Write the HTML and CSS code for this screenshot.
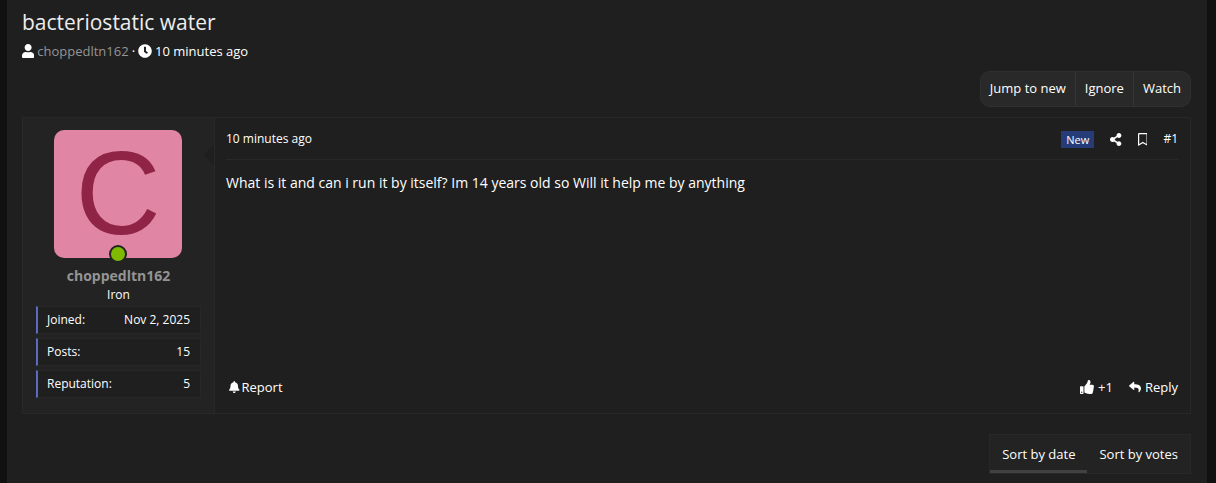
FILE: index.html
```
<!DOCTYPE html>
<html lang="en">
  <head>
    <meta charset="utf-8" />
    <meta name="viewport" content="width=device-width, initial-scale=1" />
    <title>bacteriostatic water</title>
    <link rel="stylesheet" href="styles.css">
  </head>
  <body>
    <main class="page">
      <header class="thread-header">
        <h1>bacteriostatic water</h1>
        <div class="thread-meta">
          <svg class="icon icon-user" viewBox="0 0 448 512"><path d="M224 256c70.7 0 128-57.3 128-128S294.7 0 224 0 96 57.3 96 128s57.3 128 128 128zm89.6 32h-16.7c-22.2 10.2-46.9 16-72.9 16s-50.6-5.8-72.9-16h-16.7C60.2 288 0 348.2 0 422.4V464c0 26.5 21.5 48 48 48h352c26.5 0 48-21.5 48-48v-41.6c0-74.2-60.2-134.4-134.4-134.4z"/></svg>
          <a href="#" class="author">choppedltn162</a>
          <span>·</span>
          <svg class="icon" viewBox="0 0 512 512"><path d="M256 8C119 8 8 119 8 256s111 248 248 248 248-111 248-248S393 8 256 8zm57.1 350.1L224.9 294c-3.1-2.3-4.9-5.9-4.9-9.7V116c0-6.6 5.4-12 12-12h48c6.6 0 12 5.4 12 12v137.7l63.5 46.2c5.4 3.9 6.5 11.4 2.6 16.8l-28.2 38.8c-3.9 5.3-11.4 6.5-16.8 2.6z"/></svg>
          <a href="#"><time>10 minutes ago</time></a>
        </div>
      </header>

      <div class="button-group">
        <a href="#">Jump to new</a>
        <button type="button">Ignore</button>
        <button type="button">Watch</button>
      </div>

      <article class="post">
        <aside class="post-user">
          <a href="#" class="avatar" aria-label="choppedltn162">C<span class="online"></span></a>
          <h4><a href="#">choppedltn162</a></h4>
          <div class="rank">Iron</div>
          <dl class="stats">
            <div><dt>Joined:</dt><dd>Nov 2, 2025</dd></div>
            <div><dt>Posts:</dt><dd>15</dd></div>
            <div><dt>Reputation:</dt><dd>5</dd></div>
          </dl>
        </aside>

        <div class="post-main">
          <header class="post-header">
            <a href="#"><time>10 minutes ago</time></a>
            <div class="post-tools">
              <span class="badge">New</span>
              <a href="#" aria-label="Share"><svg class="icon icon-tool" viewBox="0 0 448 512"><path d="M352 320c-22.608 0-43.387 7.819-59.79 20.895l-102.486-64.054a96.551 96.551 0 0 0 0-41.683l102.486-64.054C308.613 184.181 329.392 192 352 192c53.019 0 96-42.981 96-96S405.019 0 352 0s-96 42.981-96 96c0 7.158.79 14.13 2.276 20.841L155.79 180.895C139.387 167.819 118.608 160 96 160c-53.019 0-96 42.981-96 96s42.981 96 96 96c22.608 0 43.387-7.819 59.79-20.895l102.486 64.054A96.301 96.301 0 0 0 256 416c0 53.019 42.981 96 96 96s96-42.981 96-96-42.981-96-96-96z"/></svg></a>
              <a href="#" aria-label="Bookmark"><svg class="icon icon-tool" viewBox="0 0 384 512"><path d="M336 0H48C21.49 0 0 21.49 0 48v464l192-112 192 112V48c0-26.51-21.49-48-48-48zm0 428.43l-144-84-144 84V54a6 6 0 0 1 6-6h276c3.314 0 6 2.683 6 5.996V428.43z"/></svg></a>
              <a href="#">#1</a>
            </div>
          </header>

          <div class="post-body">What is it and can i run it by itself? Im 14 years old so Will it help me by anything</div>

          <footer class="post-footer">
            <a href="#" class="report"><svg class="icon icon-small" viewBox="0 0 448 512"><path d="M224 512c35.32 0 63.97-28.65 63.97-64H160.03c0 35.35 28.65 64 63.97 64zm215.39-149.71c-19.32-20.76-55.47-51.99-55.47-154.29 0-77.7-54.48-139.9-127.94-155.16V32c0-17.67-14.32-32-31.98-32s-31.98 14.33-31.98 32v20.84C118.56 68.1 64.08 130.3 64.08 208c0 102.3-36.15 133.53-55.47 154.29-6 6.45-8.66 14.16-8.61 21.71.11 16.4 12.98 32 32.1 32h383.8c19.12 0 32-15.6 32.1-32 .05-7.55-2.61-15.27-8.61-21.71z"/></svg>Report</a>
            <div class="post-actions">
              <button type="button"><svg class="icon" viewBox="0 0 512 512"><path d="M104 224H24c-13.255 0-24 10.745-24 24v240c0 13.255 10.745 24 24 24h80c13.255 0 24-10.745 24-24V248c0-13.255-10.745-24-24-24zM64 472c-13.255 0-24-10.745-24-24s10.745-24 24-24 24 10.745 24 24-10.745 24-24 24zM384 81.452c0 42.416-25.97 66.208-33.277 94.548h101.723c33.397 0 59.397 27.746 59.553 58.098.084 17.938-7.546 37.249-19.439 49.197l-.11.11c9.836 23.337 8.237 56.037-9.308 79.469 8.681 25.895-.069 57.704-16.382 74.757 4.298 17.598 2.244 32.575-6.148 44.632C440.202 511.587 389.616 512 346.839 512l-2.845-.001c-48.287-.017-87.806-17.598-119.56-31.725-15.957-7.099-36.821-15.887-52.651-16.178-6.54-.12-11.783-5.457-11.783-11.998v-213.77c0-3.2 1.282-6.271 3.558-8.521 39.614-39.144 56.648-80.587 89.117-113.111 14.804-14.832 20.188-37.236 25.393-58.902C282.515 39.293 291.817 0 312 0c24 0 72 8 72 81.452z"/></svg>+1</button>
              <a href="#"><svg class="icon icon-small" viewBox="0 0 512 512"><path d="M8.309 189.836L184.313 37.851C199.719 24.546 224 35.347 224 56.015v80.053c160.629 1.839 288 34.032 288 186.258 0 61.441-39.581 122.309-83.333 154.132-13.653 9.931-33.111-2.533-28.077-18.631 45.344-145.012-21.507-183.51-176.59-185.742V360c0 20.7-24.3 31.453-39.687 18.164l-176.004-151.992c-11.071-9.562-11.086-26.753 0-36.336z"/></svg>Reply</a>
            </div>
          </footer>
        </div>
      </article>

      <nav class="sort-tabs">
        <a href="#" class="active">Sort by date</a>
        <a href="#">Sort by votes</a>
      </nav>
    </main>
  </body>
</html>
```
FILE: styles.css
```
:root {
  --bg: #111;
  --page: #1f1f1f;
  --panel: #232323;
  --button: #292929;
  --border: #282828;
  --text: #fff;
  --muted: #949494;
  --accent: #5c6bc0;
}
* {
  margin: 0;
  padding: 0;
  box-sizing: border-box;
}
body {
  min-height: 100vh;
  display: flex;
  padding: 0 9px 0 7px;
  background: var(--bg);
  color: var(--text);
  font: 13px/20px "Segoe UI", "Open Sans", "Noto Sans", sans-serif;
}
a {
  color: inherit;
  text-decoration: none;
}
button {
  background: none;
  border: none;
  color: inherit;
  font: inherit;
  cursor: pointer;
}
.icon {
  height: 14px;
  fill: currentColor;
  flex: none;
}
.icon-small {
  height: 12px;
}
.icon-tool {
  height: 13px;
}
.page {
  flex: 1;
  display: flex;
  flex-direction: column;
  padding: 8px 16px 8px 15px;
  background: var(--page);
}

.thread-header h1 {
  font-size: 21px;
  font-weight: 400;
  line-height: 28px;
  color: #ededed;
}
.thread-meta {
  display: flex;
  align-items: center;
  gap: 3px;
  margin-top: 5px;
}
.author {
  color: var(--muted);
}

.button-group {
  align-self: flex-end;
  display: flex;
  margin-top: 10px;
  background: var(--button);
  border: 1px solid #303030;
  border-radius: 10px;
}
.button-group > * {
  padding: 6px 9px 8px;
}
.button-group > * + * {
  border-left: 1px solid #353535;
}

.post {
  display: flex;
  margin-top: 10px;
  border: 1px solid var(--border);
}
.post-user {
  position: relative;
  width: 192px;
  flex: none;
  padding: 12px 13px 15px;
  background: var(--panel);
  border-right: 1px solid var(--border);
  text-align: center;
}
/* arrow pointing at the user */
.post-user::after {
  content: "";
  position: absolute;
  top: 28px;
  right: -9px;
  width: 16px;
  height: 16px;
  background: var(--page);
  border: 1px solid var(--border);
  border-top-color: transparent;
  border-right-color: transparent;
  transform: rotate(45deg);
  clip-path: polygon(0 0, 100% 100%, 0 100%);
}
.avatar {
  position: relative;
  display: block;
  width: 128px;
  height: 128px;
  margin: 0 18px;
  border-radius: 10px;
  background: #e085a3;
  color: #8f2446;
  font: 118px/126px "Liberation Sans", Arial, sans-serif;
}
.online {
  position: absolute;
  left: 55px;
  bottom: -5px;
  width: 18px;
  height: 18px;
  border: 2px solid var(--panel);
  border-radius: 50%;
  background: #7fb900;
}
.post-user h4 {
  margin-top: 8px;
  font-size: 14px;
  font-weight: 700;
  color: var(--muted);
}
.rank {
  font-size: 12px;
  line-height: 17px;
}
.stats {
  display: flex;
  flex-direction: column;
  gap: 4px;
  margin-top: 3px;
  font-size: 12px;
}
.stats div {
  display: flex;
  justify-content: space-between;
  padding: 3px 10px 3px 9px;
  background: var(--page);
  border: 1px solid var(--border);
  border-left: 2px solid var(--accent);
}

.post-main {
  flex: 1;
  display: flex;
  flex-direction: column;
  padding: 0 12px 16px 11px;
}
.post-header {
  display: flex;
  justify-content: space-between;
  align-items: center;
  padding: 11px 0 10px;
  border-bottom: 1px solid var(--border);
  font-size: 12px;
}
.post-tools {
  display: flex;
  align-items: center;
  gap: 16px;
}
.post-tools a {
  display: flex;
}
.badge {
  padding: 0 5px;
  background: #263c78;
  font-size: 11px;
  line-height: 17px;
}
.post-body {
  flex: 1;
  padding-top: 13px;
  font-size: 14px;
}
.post-footer,
.post-actions,
.post-footer a,
.post-footer button {
  display: flex;
  align-items: center;
}
.post-footer {
  justify-content: space-between;
}
.post-actions {
  gap: 16px;
}
.post-actions > * {
  gap: 4px;
}
.report {
  padding-left: 3px;
  gap: 2px;
}

.sort-tabs {
  align-self: flex-end;
  display: flex;
  margin-top: 20px;
  background: var(--panel);
  border: 1px solid var(--border);
}
.sort-tabs a {
  padding: 9px 12px 6px;
  border-bottom: 3px solid transparent;
}
.sort-tabs .active {
  border-bottom-color: #414141;
}
```
